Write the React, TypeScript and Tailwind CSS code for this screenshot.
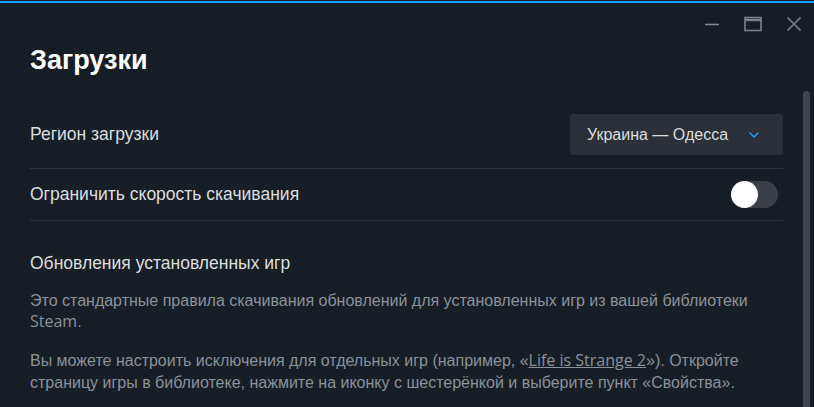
import { ChevronDown } from "lucide-react";

function WindowControls() {
  return (
    <div className="flex flex-row items-center justify-end h-[42px] pr-[12px] gap-[24px] text-[#7c838c]">
      <svg width="16" height="16" viewBox="0 0 16 16">
        <path d="M1 8.5h14" stroke="currentColor" strokeWidth="1.6" />
      </svg>
      <svg width="18" height="16" viewBox="0 0 18 16">
        <rect x="1" y="1.5" width="16" height="13" fill="none" stroke="currentColor" strokeWidth="1.6" />
        <path d="M1 4h16" stroke="currentColor" strokeWidth="2.4" />
      </svg>
      <svg width="16" height="16" viewBox="0 0 16 16">
        <path d="M1.5 1.5l13 13M14.5 1.5l-13 13" stroke="currentColor" strokeWidth="1.6" />
      </svg>
    </div>
  );
}

function Toggle() {
  return (
    <div className="w-[47px] h-[27px] rounded-full bg-[#3b3f47] relative">
      <div className="absolute left-0 top-0 w-[27px] h-[27px] rounded-full bg-white" />
    </div>
  );
}

export default function App() {
  return (
    <div
      className="w-[814px] h-[407px] bg-[#171d25] pt-[1px] overflow-hidden relative"
      style={{ fontFamily: '"Liberation Sans", Arial, sans-serif' }}
    >
      <div className="h-[2px] bg-[#1a9fff]" />
      <WindowControls />
      {/* scrollbar */}
      <div className="absolute right-[4px] top-[91px] bottom-0 w-[7px] rounded-t-[4px] bg-[#3d4450]" />

      <div className="pl-[30px] pr-[31px]">
        <h1 className="text-[27px] font-bold text-white leading-[32px] -mt-[1px]">Загрузки</h1>

        <div className="mt-[25px] flex flex-row items-center justify-between h-[68px] border-b border-[#2e333b]">
          <span className="text-[17.5px] text-[#dcdedf]">Регион загрузки</span>
          <div className="w-[213px] h-[41px] rounded-[3px] bg-[#2a2f38] flex flex-row items-center pl-[17px] pr-[21px] justify-between">
            <span className="text-[16px] text-[#dcdedf]">Украина — Одесса</span>
            <ChevronDown className="w-[16px] h-[16px] text-[#1a9fff]" strokeWidth={2.2} />
          </div>
        </div>

        <div className="flex flex-row items-center justify-between h-[52px] border-b border-[#2e333b]">
          <span className="text-[17.5px] text-[#dcdedf]">Ограничить скорость скачивания</span>
          <div className="mr-[5px]">
            <Toggle />
          </div>
        </div>

        <div className="mt-[32px] text-[17.5px] text-[#dcdedf] leading-[20px]">Обновления установленных игр</div>

        <p className="mt-[17px] text-[16px] leading-[21px] text-[#8b929a]">
          Это стандартные правила скачивания обновлений для установленных игр из вашей библиотеки{" "}
          <span style={{ fontFamily: '"Open Sans", sans-serif' }}>Steam</span>.
        </p>

        <p className="mt-[17px] text-[16px] leading-[22px] text-[#8b929a]">
          Вы можете настроить исключения для отдельных игр (например, «
          <span className="underline" style={{ fontFamily: '"Open Sans", sans-serif' }}>
            Life is Strange 2
          </span>
          »). Откройте страницу игры в библиотеке, нажмите на иконку с шестерёнкой и выберите пункт «Свойства».
        </p>
      </div>
    </div>
  );
}
